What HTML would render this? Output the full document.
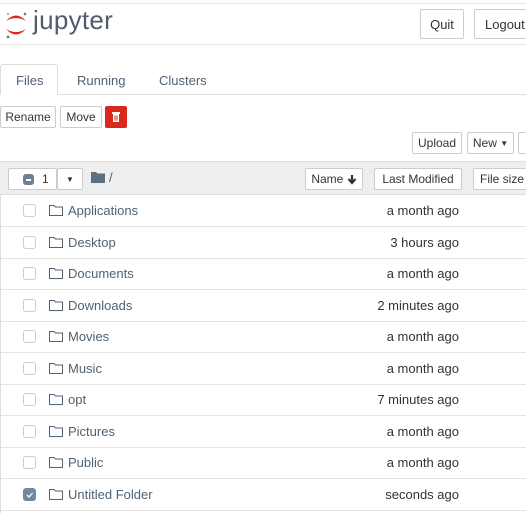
<!DOCTYPE html>
<html><head><style>
body{margin:0;width:526px;height:513px;overflow:hidden;background:#fff;font-family:"Liberation Sans",Arial,sans-serif;font-size:13px;color:#333;position:relative}
.abs{position:absolute}
.btn{position:absolute;border:1px solid #ccc;border-radius:2px;background:#fff;font-size:12px;color:#333;box-sizing:border-box;display:flex;align-items:center;justify-content:center}
.row{position:absolute;left:1px;width:525px;height:31px;border-bottom:1px solid #e3e3e3}
.cb{position:absolute;left:22px;top:9px;width:11px;height:11px;border:1px solid #ccc;border-radius:3px;background:#fff}
.fd{position:absolute;left:48px;top:9px}
.nm{position:absolute;left:67px;top:8px;color:#4f6274;font-size:13px}
.tm{position:absolute;right:67px;top:8px;color:#333;font-size:13px}
</style></head><body>
<div class="abs" style="left:0;top:3px;width:526px;border-top:1px solid #e5e5e5"></div>
<svg class="abs" style="left:4px;top:9px" width="24" height="30" viewBox="0 0 24 30">
<path d="M2 12 Q12 1 22 12 Q12 6 2 12Z" fill="#e1251b"/>
<path d="M2 20 Q12 31 22 20 Q12 26 2 20Z" fill="#e1251b"/>
<circle cx="4" cy="28" r="1.4" fill="#767677"/><circle cx="21" cy="5" r="1.3" fill="#767677"/><circle cx="4" cy="5" r="0.9" fill="#767677"/>
</svg>
<div class="abs" style="left:33px;top:5px;font-size:26px;color:#4e5d6c;letter-spacing:0.3px">jupyter</div>
<div class="btn" style="left:420px;top:9px;width:44px;height:30px;font-size:13px">Quit</div>
<div class="btn" style="left:474px;top:9px;width:60px;height:30px;justify-content:flex-start;padding-left:10px;font-size:13px">Logout</div>
<div class="abs" style="left:0;top:44px;width:526px;border-top:1px solid #e5e5e5"></div>
<div class="abs" style="left:0;top:94px;width:526px;border-top:1px solid #ddd"></div>
<div class="abs" style="left:0;top:64px;width:58px;height:31px;border:1px solid #ddd;border-bottom:1px solid #fff;border-radius:3px 3px 0 0;background:#fff;box-sizing:border-box"></div>
<div class="abs" style="left:16px;top:73px;color:#4f6274">Files</div>
<div class="abs" style="left:77px;top:73px;color:#4f6274">Running</div>
<div class="abs" style="left:159px;top:73px;color:#4f6274">Clusters</div>
<div class="btn" style="left:0;top:106px;width:56px;height:22px">Rename</div>
<div class="btn" style="left:60px;top:106px;width:42px;height:22px">Move</div>
<div class="btn" style="left:105px;top:106px;width:22px;height:22px;background:#d9291c;border-color:#d9291c"><svg width="8" height="10"><rect x="0" y="0" width="8" height="2" fill="#fff"/><rect x="1" y="2" width="6" height="8" fill="#fff"/><rect x="2.5" y="3.5" width="1" height="5" fill="#d9291c"/><rect x="4.5" y="3.5" width="1" height="5" fill="#d9291c"/></svg></div>
<div class="btn" style="left:412px;top:132px;width:50px;height:22px">Upload</div>
<div class="btn" style="left:467px;top:132px;width:47px;height:22px">New&nbsp;<span style="font-size:8px">▼</span></div>
<div class="btn" style="left:518px;top:132px;width:20px;height:22px"></div>
<div class="abs" style="left:0;top:161px;width:526px;height:34px;background:#eee;border-top:1px solid #ddd;border-bottom:1px solid #ddd;box-sizing:border-box"></div>
<div class="btn" style="left:8px;top:168px;width:49px;height:22px;justify-content:flex-start;padding-left:14px"><span style="position:absolute;left:14px;top:5px;width:11px;height:11px;border-radius:3px;background:#6b7f95"></span><span style="position:absolute;left:17px;top:10px;width:5px;height:1.5px;background:#fff"></span><span style="margin-left:19px">1</span></div>
<div class="btn" style="left:57px;top:168px;width:26px;height:22px;font-size:8px">▼</div>
<svg class="abs" style="left:91px;top:171px" width="14" height="12"><path d="M0 1h5l1.5 1.5H14V12H0Z" fill="#5e6f80"/></svg>
<div class="abs" style="left:109px;top:170px;color:#4f6274">/</div>
<div class="btn" style="left:305px;top:168px;width:58px;height:22px">Name&nbsp;<svg width="10" height="11"><path d="M5 1v7M1.5 5L5 9l3.5-4" fill="none" stroke="#333" stroke-width="2.2"/></svg></div>
<div class="btn" style="left:374px;top:168px;width:88px;height:22px">Last Modified</div>
<div class="btn" style="left:473px;top:168px;width:60px;height:22px;justify-content:flex-start;padding-left:6px">File size</div>
<div class="abs" style="left:0;top:195px;height:318px;border-left:1px solid #ddd"></div>
<div class="row" style="top:195px"><div class="cb"></div><svg class="fd" width="14" height="12"><path d="M0.5 1.5h4.5l1.5 1.5h7v8.5h-13Z" fill="none" stroke="#4f6274"/></svg><div class="nm">Applications</div><div class="tm">a month ago</div></div>
<div class="row" style="top:227px"><div class="cb"></div><svg class="fd" width="14" height="12"><path d="M0.5 1.5h4.5l1.5 1.5h7v8.5h-13Z" fill="none" stroke="#4f6274"/></svg><div class="nm">Desktop</div><div class="tm">3 hours ago</div></div>
<div class="row" style="top:258px"><div class="cb"></div><svg class="fd" width="14" height="12"><path d="M0.5 1.5h4.5l1.5 1.5h7v8.5h-13Z" fill="none" stroke="#4f6274"/></svg><div class="nm">Documents</div><div class="tm">a month ago</div></div>
<div class="row" style="top:290px"><div class="cb"></div><svg class="fd" width="14" height="12"><path d="M0.5 1.5h4.5l1.5 1.5h7v8.5h-13Z" fill="none" stroke="#4f6274"/></svg><div class="nm">Downloads</div><div class="tm">2 minutes ago</div></div>
<div class="row" style="top:321px"><div class="cb"></div><svg class="fd" width="14" height="12"><path d="M0.5 1.5h4.5l1.5 1.5h7v8.5h-13Z" fill="none" stroke="#4f6274"/></svg><div class="nm">Movies</div><div class="tm">a month ago</div></div>
<div class="row" style="top:353px"><div class="cb"></div><svg class="fd" width="14" height="12"><path d="M0.5 1.5h4.5l1.5 1.5h7v8.5h-13Z" fill="none" stroke="#4f6274"/></svg><div class="nm">Music</div><div class="tm">a month ago</div></div>
<div class="row" style="top:384px"><div class="cb"></div><svg class="fd" width="14" height="12"><path d="M0.5 1.5h4.5l1.5 1.5h7v8.5h-13Z" fill="none" stroke="#4f6274"/></svg><div class="nm">opt</div><div class="tm">7 minutes ago</div></div>
<div class="row" style="top:416px"><div class="cb"></div><svg class="fd" width="14" height="12"><path d="M0.5 1.5h4.5l1.5 1.5h7v8.5h-13Z" fill="none" stroke="#4f6274"/></svg><div class="nm">Pictures</div><div class="tm">a month ago</div></div>
<div class="row" style="top:447px"><div class="cb"></div><svg class="fd" width="14" height="12"><path d="M0.5 1.5h4.5l1.5 1.5h7v8.5h-13Z" fill="none" stroke="#4f6274"/></svg><div class="nm">Public</div><div class="tm">a month ago</div></div>
<div class="row" style="top:479px"><div class="cb" style="background:#7487a0;border-color:#7487a0"><svg width="11" height="11" style="position:absolute;left:0;top:0"><path d="M3 6l2 2 3.5-4" fill="none" stroke="#fff" stroke-width="1.3"/></svg></div><svg class="fd" width="14" height="12"><path d="M0.5 1.5h4.5l1.5 1.5h7v8.5h-13Z" fill="none" stroke="#4f6274"/></svg><div class="nm">Untitled Folder</div><div class="tm">seconds ago</div></div>
</body></html>
